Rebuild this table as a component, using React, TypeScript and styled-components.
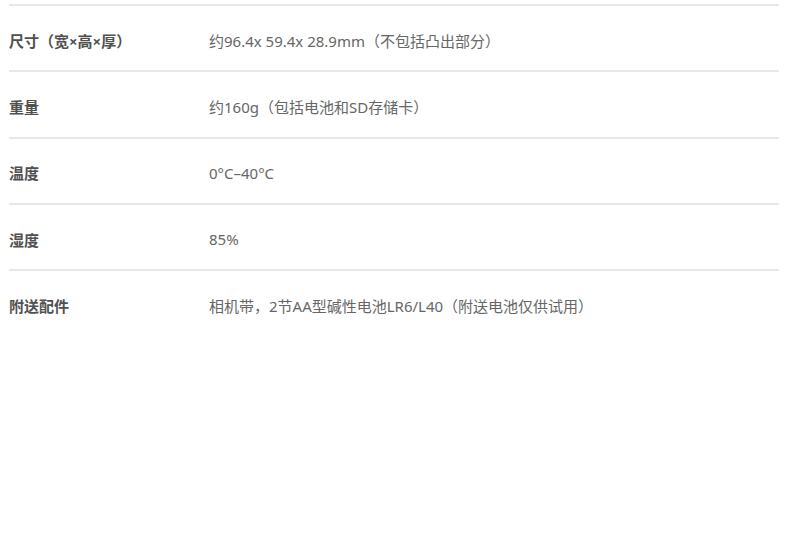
import React from "react";
import styled, { createGlobalStyle } from "styled-components";

const GlobalStyle = createGlobalStyle`
  html, body {
    margin: 0;
    padding: 0;
    background: #ffffff;
  }
  body {
    font-family: "Noto Sans", "Noto Sans CJK SC", sans-serif;
  }
`;

const SpecTable = styled.div`
  width: 770px;
  margin-left: 9px;
  padding-top: 4px;
  display: flex;
  flex-direction: column;
`;

const Row = styled.div`
  display: grid;
  grid-template-columns: 200px 1fr;
  align-items: center;
  box-sizing: border-box;
  height: 66.3px;
  padding-top: 4px;
  border-top: 2px solid #e8e8e8;
`;

const Label = styled.div`
  font-family: "Noto Sans", "Noto Sans CJK SC", sans-serif;
  font-size: 15px;
  font-weight: 700;
  color: #505050;
  white-space: nowrap;
`;

const Value = styled.div`
  font-family: "Noto Sans", "Noto Sans CJK SC", sans-serif;
  font-size: 15px;
  font-weight: 400;
  color: #666666;
  white-space: nowrap;
`;

const specs: { label: string; value: string }[] = [
  { label: "尺寸（宽×高×厚）", value: "约96.4x 59.4x 28.9mm（不包括凸出部分）" },
  { label: "重量", value: "约160g（包括电池和SD存储卡）" },
  { label: "温度", value: "0°C–40°C" },
  { label: "湿度", value: "85%" },
  { label: "附送配件", value: "相机带，2节AA型碱性电池LR6/L40（附送电池仅供试用）" },
];

export default function App() {
  return (
    <>
      <GlobalStyle />
      <SpecTable>
        {specs.map((s) => (
          <Row key={s.label}>
            <Label>{s.label}</Label>
            <Value>{s.value}</Value>
          </Row>
        ))}
      </SpecTable>
    </>
  );
}
